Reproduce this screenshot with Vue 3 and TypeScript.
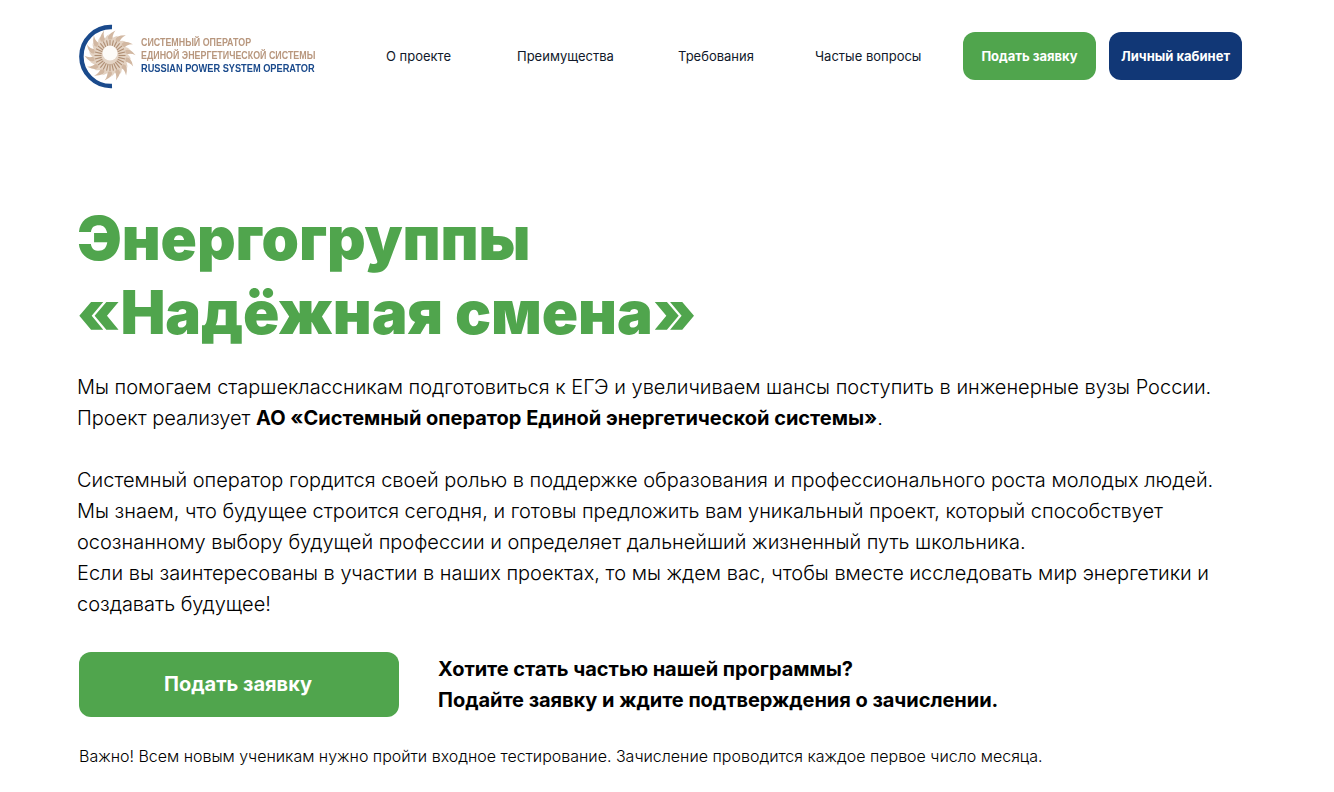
<script setup lang="ts">
const cx = 110
const cy = 55.5
const longRays = Array.from({ length: 14 }, (_, i) => `rotate(${(i * 360) / 14} ${cx} ${cy})`)
const shortRays = Array.from({ length: 14 }, (_, i) => `rotate(${((i + 0.5) * 360) / 14} ${cx} ${cy})`)
const ticks = Array.from({ length: 28 }, (_, i) => `rotate(${(i * 360) / 28} ${cx} ${cy})`)
const nav = ['О проекте', 'Преимущества', 'Требования', 'Частые вопросы']
</script>

<template>
  <div class="page">
    <header class="header">
      <div class="logo">
        <svg class="mark" width="64" height="68" viewBox="78 22 64 68" aria-hidden="true">
          <path d="M112 27 A29.520 29.520 0 1 0 112 86" fill="none" stroke="#1a4a8c" stroke-width="4.500" />
          <g fill="#d2b8a2">
            <path v-for="r in longRays" :key="r" :transform="r" d="M106.500 41 Q106 35 115.500 30.500 Q111 36 113.500 41 Z" />
          </g>
          <g fill="#e3d2c2">
            <path v-for="r in shortRays" :key="r" :transform="r" d="M107.500 41 Q108 37 113.500 34.500 Q111 38 112.500 41 Z" />
          </g>
          <circle cx="110" cy="55.500" r="16" fill="#e4d4c5" />
          <g stroke="#b08f74" stroke-width="1.100">
            <line v-for="t in ticks" :key="t" :transform="t" x1="110" y1="40" x2="110" y2="47" />
          </g>
          <circle cx="110" cy="53" r="7.500" fill="#fdfbf8" />
        </svg>
        <div class="logo-text">
          <span class="tan">СИСТЕМНЫЙ ОПЕРАТОР</span>
          <span class="tan">ЕДИНОЙ ЭНЕРГЕТИЧЕСКОЙ СИСТЕМЫ</span>
          <span class="blue">RUSSIAN POWER SYSTEM OPERATOR</span>
        </div>
      </div>
      <nav class="nav">
        <a v-for="n in nav" :key="n">{{ n }}</a>
      </nav>
      <div class="actions">
        <button class="btn green">Подать заявку</button>
        <button class="btn navy">Личный кабинет</button>
      </div>
    </header>

    <main class="main">
      <h1>Энергогруппы<br />«Надёжная смена»</h1>
      <p class="copy">
        Мы помогаем старшеклассникам подготовиться к ЕГЭ и увеличиваем шансы поступить в инженерные вузы России.<br />
        Проект реализует <b>АО «Системный оператор Единой энергетической системы»</b>.
      </p>
      <p class="copy second">
        Системный оператор гордится своей ролью в поддержке образования и профессионального роста молодых людей.<br />
        Мы знаем, что будущее строится сегодня, и готовы предложить вам уникальный проект, который способствует<br />
        осознанному выбору будущей профессии и определяет дальнейший жизненный путь школьника.<br />
        Если вы заинтересованы в участии в наших проектах, то мы ждем вас, чтобы вместе исследовать мир энергетики и<br />
        создавать будущее!
      </p>
      <div class="cta">
        <button class="apply">Подать заявку</button>
        <p>Хотите стать частью нашей программы?<br />Подайте заявку и ждите подтверждения о зачислении.</p>
      </div>
      <p class="note">Важно! Всем новым ученикам нужно пройти входное тестирование. Зачисление проводится каждое первое число месяца.</p>
    </main>
  </div>
</template>

<style>
html, body { background: #fff; }
</style>

<style scoped>
.page {
  width: 1334px;
  height: 792px;
  overflow: hidden;
  box-sizing: border-box;
  font-family: Inter, "Noto Sans", sans-serif;
  color: #000;
  background: #fff;
}
.header {
  display: flex;
  align-items: center;
  height: 112px;
  padding-left: 78px;
}
.logo {
  display: flex;
  align-items: center;
  width: 308px;
}
.mark { flex: none; filter: blur(0.3px); }
.logo-text {
  display: flex;
  flex-direction: column;
  margin: -1px 0 0 -1px;
  font-family: "Liberation Sans", sans-serif;
  font-size: 10.500px;
  font-weight: 700;
  line-height: 13px;
  white-space: nowrap;
  filter: blur(0.25px);
}
.logo-text span { transform-origin: left center; }
.tan { color: #b8977e; transform: scaleX(0.846); }
.blue { color: #1a4a8c; font-size: 11px; transform: scaleX(0.84); }
.nav {
  display: flex;
  width: 577px;
  font-size: 13px;
  color: #10182a;
}
.nav a:nth-child(1) { width: 131px; }
.nav a:nth-child(2) { width: 161px; }
.nav a:nth-child(3) { width: 137px; }
.actions {
  display: flex;
  gap: 13px;
}
.btn {
  width: 133px;
  height: 48px;
  border: 0;
  border-radius: 12px;
  color: #fff;
  font: 700 13px Inter, sans-serif;
  padding: 0;
}
.green { background: #50a54d; }
.navy { background: #113776; }
.main { padding: 0 0 0 77px; }
h1 {
  margin: 89px 0 0;
  color: #50a54d;
  font-size: 60px;
  font-weight: 900;
  line-height: 74px;
  letter-spacing: -0.1px;
}
.copy {
  margin: 23px 0 0;
  font-size: 20px;
  font-weight: 300;
  line-height: 31px;
  letter-spacing: -0.01px;
  white-space: nowrap;
}
.copy b { font-weight: 700; }
.copy.second { margin-top: 31px; }
.cta {
  display: flex;
  align-items: center;
  margin: 32px 0 0 2px;
}
.apply {
  width: 320px;
  height: 65px;
  border: 0;
  border-radius: 12px;
  background: #50a54d;
  color: #fff;
  font: 700 20px Inter, sans-serif;
  padding: 0 2px 2px 0;
}
.cta p {
  margin: 0 0 0 39px;
  font-size: 20px;
  font-weight: 700;
  line-height: 31px;
  letter-spacing: -0.04px;
  white-space: nowrap;
}
.note {
  margin: 29px 0 0 2px;
  font-size: 16px;
  font-weight: 300;
  line-height: 20px;
  letter-spacing: -0.01px;
  white-space: nowrap;
}
</style>
